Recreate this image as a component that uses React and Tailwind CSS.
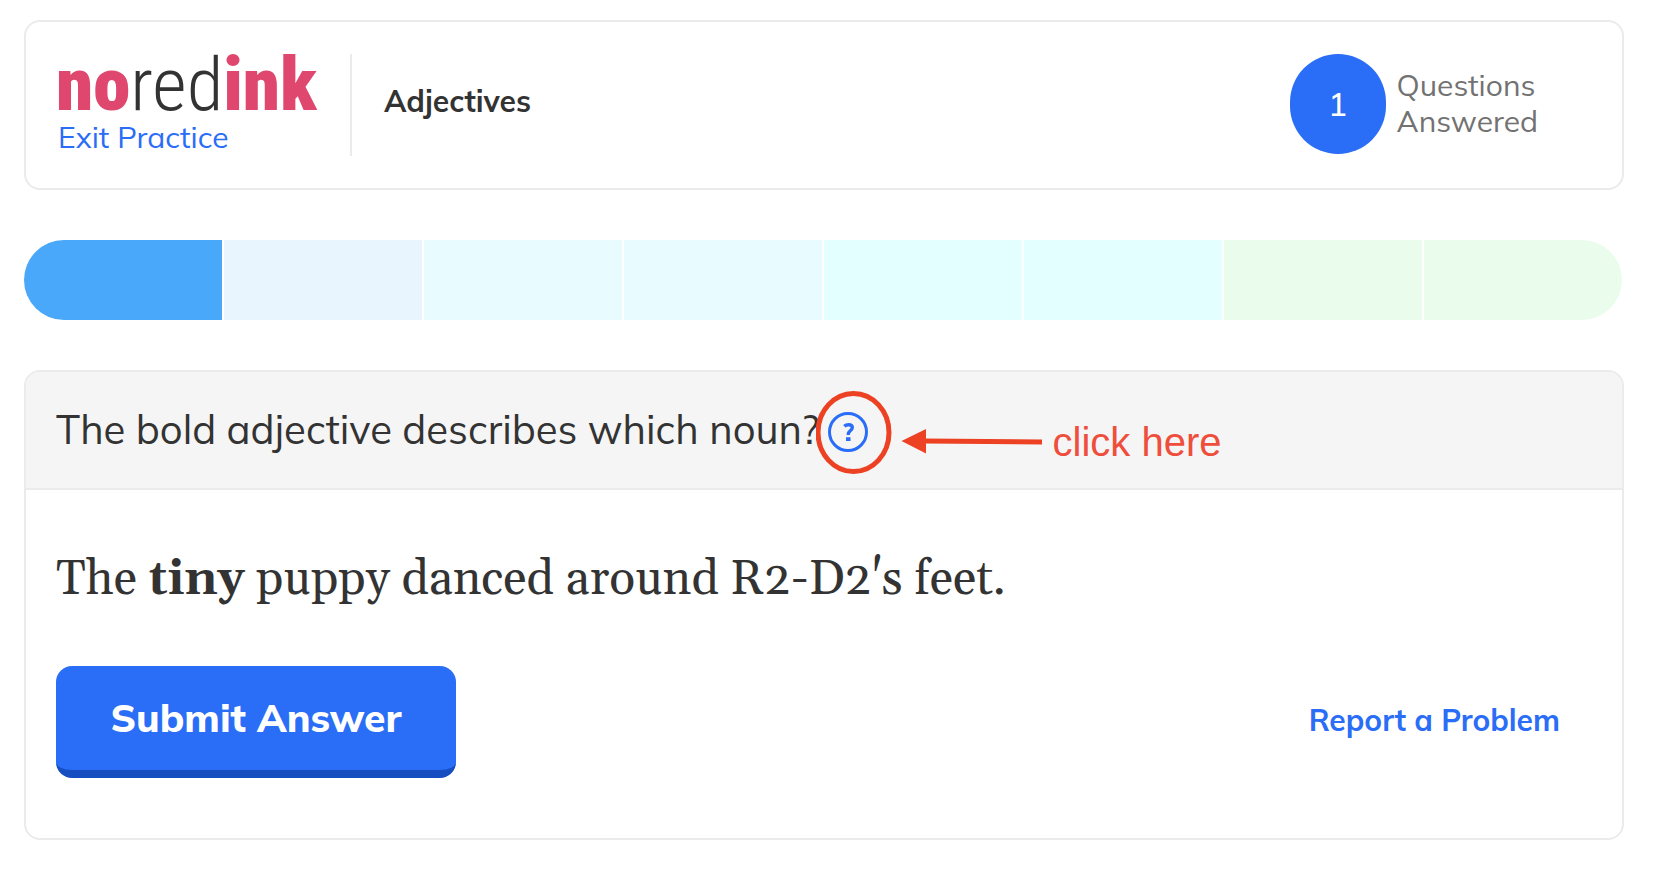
import React from 'react';

const segments = [
  'bg-[#49a8f9]',
  'bg-[#e9f5fe]',
  'bg-[#e8fbfe]',
  'bg-[#e8fbfe]',
  'bg-[#e4ffff]',
  'bg-[#e4ffff]',
  'bg-[#eafded]',
  'bg-[#eafded]',
];

function Logo() {
  return (
    <div className="font-['Roboto_Condensed',sans-serif] text-[75px] leading-[60px] font-black text-[#e0476f]">
      no<span className="font-light text-[#333333]">red</span>ink
    </div>
  );
}

function Header() {
  return (
    <header className="flex border-2 border-[#ebebeb] rounded-2xl py-8 pl-[30px] pr-[84px]">
      <div className="w-[294px] shrink-0">
        <Logo />
        <a href="#" className="block px-0.5 pt-1 text-[30px] leading-[38px] text-[#2a6df6]">Exit Practice</a>
      </div>
      <div className="flex-1 flex items-center border-l-2 border-[#ebebeb] pl-8 pb-2">
        <h1 className="text-[30px] leading-9 font-bold text-[#333333]">Adjectives</h1>
      </div>
      <div className="flex items-start gap-[11px]">
        <div className="w-24 h-[100px] rounded-[50px] bg-[#2a6df6] flex items-center justify-center text-white text-[32px] font-medium">1</div>
        <div className="pt-[13px] text-[30px] leading-9 text-[#727272]">
          Questions<br />Answered
        </div>
      </div>
    </header>
  );
}

function ProgressBar() {
  return (
    <div className="flex gap-0.5 h-20 mr-0.5 rounded-full overflow-hidden">
      {segments.map((color, i) => (
        <div key={i} className={`flex-1 ${color}`} />
      ))}
    </div>
  );
}

// Hand-drawn callout that sits on top of the help button
function Callout() {
  return (
    <div className="absolute -left-3 -top-[22px] flex items-center pointer-events-none">
      <svg width="228" height="86" viewBox="0 0 228 86" fill="none">
        <ellipse cx="37.500" cy="42.500" rx="35.500" ry="39" stroke="#ed4124" strokeWidth="5" />
        <path d="M109 51L226 52" stroke="#ed4124" strokeWidth="5" />
        <path d="M85.500 51L110 39V63.500Z" fill="#ed4124" />
      </svg>
      <span className="pl-[9px] pt-[18px] font-['Liberation_Sans',Arial,sans-serif] text-[40px] leading-none whitespace-nowrap text-[#ee4e3b]">click here</span>
    </div>
  );
}

function HelpButton() {
  return (
    <div className="relative mt-1.5">
      <button aria-label="Help" className="block rounded-full">
        <svg width="40" height="40" viewBox="0 0 40 40" fill="none">
          <circle cx="20" cy="20" r="18.500" stroke="#2a6df6" strokeWidth="3" />
          <path d="M16.300 14.300C17.500 13.200 19 12.700 20.600 12.700C23 12.700 24.300 13.800 24.300 15.600C24.300 18.600 20.300 18.400 20.300 22.300V23" stroke="#2a6df6" strokeWidth="3.400" />
          <path d="M18 25.300H22.500V29H18Z" fill="#2a6df6" />
        </svg>
      </button>
      <Callout />
    </div>
  );
}

function QuestionCard() {
  return (
    <main className="border-2 border-[#ebebeb] rounded-2xl overflow-hidden text-[#333333]">
      <div className="flex items-center gap-2 bg-[#f5f5f5] border-b-2 border-[#ebebeb] px-[30px] pt-8 pb-[34px]">
        <h2 className="text-[40px] leading-[50px]">The bold adjective describes which noun?</h2>
        <HelpButton />
      </div>
      <div className="px-[30px] py-[60px]">
        <p className="font-['Gelasio',Georgia,serif] text-[48px] leading-[60px]">
          The <b>tiny</b> puppy danced around R2-D2's feet.
        </p>
        <div className="flex items-center justify-between pt-14 pr-8">
          <button className="w-[400px] h-28 rounded-2xl border-b-8 border-[#164dc0] bg-[#2a6df6] text-white text-[39px] font-extrabold">Submit Answer</button>
          <a href="#" className="pb-1 text-[30px] leading-9 font-bold text-[#2a6df6]">Report a Problem</a>
        </div>
      </div>
    </main>
  );
}

export default function App() {
  return (
    <div className="min-h-screen bg-white flex flex-col gap-[50px] pt-5 pb-14 pl-6 pr-[50px] font-['Mulish','Open_Sans',sans-serif]">
      <Header />
      <ProgressBar />
      <QuestionCard />
    </div>
  );
}
